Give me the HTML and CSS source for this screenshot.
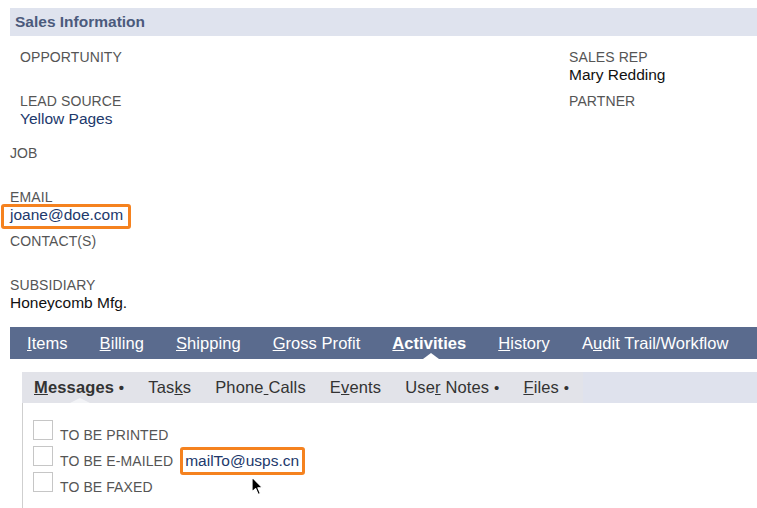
FILE: index.html
```html
<!DOCTYPE html>
<html>
<head>
<meta charset="utf-8">
<title>Sales Information</title>
<link rel="stylesheet" href="styles.css">
</head>
<body>
<div class="page">
  <div class="section-head">Sales Information</div>

  <div class="group group-top">
    <div class="col col-left">
      <div class="field"><div class="label">OPPORTUNITY</div><div class="value"></div></div>
      <div class="field"><div class="label">LEAD SOURCE</div><div class="value link">Yellow Pages</div></div>
    </div>
    <div class="col">
      <div class="field"><div class="label">SALES REP</div><div class="value">Mary Redding</div></div>
      <div class="field"><div class="label">PARTNER</div><div class="value"></div></div>
    </div>
  </div>

  <div class="group group-main">
    <div class="field"><div class="label">JOB</div><div class="value"></div></div>
    <div class="field"><div class="label">EMAIL</div><div class="value link"><span class="hl hl-email">joane@doe.com</span></div></div>
    <div class="field"><div class="label">CONTACT(S)</div><div class="value"></div></div>
    <div class="field"><div class="label">SUBSIDIARY</div><div class="value">Honeycomb Mfg.</div></div>
  </div>

  <nav class="tabs">
    <span class="tab"><u>I</u>tems</span>
    <span class="tab"><u>B</u>illing</span>
    <span class="tab"><u>S</u>hipping</span>
    <span class="tab"><u>G</u>ross Profit</span>
    <span class="tab tab-active"><u>A</u>ctivities</span>
    <span class="tab"><u>H</u>istory</span>
    <span class="tab">A<u>u</u>dit Trail/Workflow</span>
  </nav>

  <div class="subpanel">
    <div class="subtabs">
      <div class="subtab-list">
        <span class="subtab subtab-active"><u>M</u>essages <span class="dot">•</span></span>
        <span class="subtab">Tas<u>k</u>s</span>
        <span class="subtab">Phone<u> </u>Calls</span>
        <span class="subtab">E<u>v</u>ents</span>
        <span class="subtab">Use<u>r</u> Notes <span class="dot">•</span></span>
        <span class="subtab"><u>F</u>iles <span class="dot">•</span></span>
      </div>
    </div>
    <div class="panel-body">
      <div class="check-row"><span class="box"></span><span class="check-label">TO BE PRINTED</span></div>
      <div class="check-row"><span class="box"></span><span class="check-label">TO BE E-MAILED</span><span class="mail hl hl-mail">mailTo@usps.cn</span></div>
      <div class="check-row"><span class="box"></span><span class="check-label">TO BE FAXED</span></div>
    </div>
  </div>
</div>

<svg class="cursor" width="14" height="21" viewBox="0 0 14 21" aria-hidden="true">
  <path d="M1 1 L1 16 L4.6 12.6 L7.2 18.6 L9.4 17.6 L6.9 11.8 L11.6 11.8 Z" fill="#000" stroke="#fff" stroke-width="1.2" stroke-linejoin="round"/>
</svg>
</body>
</html>
```

FILE: styles.css
```css
html, body {
  margin: 0;
  padding: 0;
  background: #ffffff;
}

body {
  font-family: "Liberation Sans", Arial, Helvetica, sans-serif;
  color: #555555;
  width: 757px;
  height: 508px;
  overflow: hidden;
  position: relative;
}

.page {
  padding-top: 8px;
}

.section-head {
  margin-left: 10px;
  height: 28px;
  line-height: 28px;
  padding-left: 5px;
  background: #dfe3ee;
  color: #4b5a7c;
  font-weight: bold;
  font-size: 15.5px;
}

.group {
  display: flex;
}

.group-top {
  margin-top: 13px;
  padding-left: 20px;
}

.col-left {
  width: 549px;
}

.group-main {
  margin-top: 8px;
  padding-left: 10px;
  flex-direction: column;
  margin-bottom: 6px;
}

.field {
  margin-bottom: 10px;
}

.label {
  font-size: 14px;
  line-height: 17px;
  height: 17px;
  color: #555555;
  letter-spacing: 0.1px;
}

.value {
  font-size: 15.5px;
  line-height: 17px;
  height: 17px;
  color: #111111;
}

.value.link {
  color: #21386b;
}

.hl {
  position: relative;
  display: inline-block;
}

.hl::after {
  content: "";
  position: absolute;
  border: 3px solid #f5821f;
  border-radius: 3px;
}

.hl-email::after {
  top: -2px;
  bottom: -6px;
  left: -9px;
  right: -8px;
}

/* Main tab bar */
.tabs {
  margin-left: 10px;
  height: 32px;
  background: #5a6b8e;
  display: flex;
  padding-left: 1px;
}

.tab {
  position: relative;
  padding: 0 16px;
  line-height: 32px;
  font-size: 16.5px;
  letter-spacing: 0.05px;
  color: #ffffff;
  white-space: nowrap;
}

.tab-active {
  font-weight: bold;
}

.tab-active::after {
  content: "";
  position: absolute;
  left: 50%;
  bottom: 0;
  margin-left: -6px;
  border-left: 8px solid transparent;
  border-right: 8px solid transparent;
  border-bottom: 6px solid #ffffff;
}

/* Sub panel */
.subpanel {
  margin-top: 13px;
  margin-left: 22px;
}

.subtabs {
  height: 31px;
  background: #dfe2ed;
  display: flex;
}

.subtab-list {
  display: flex;
  background: #e2e3e9;
}

.subtab {
  position: relative;
  padding: 0 12px;
  line-height: 31px;
  font-size: 16.5px;
  letter-spacing: 0.15px;
  color: #333333;
  white-space: nowrap;
}

.subtab:last-child {
  padding-right: 14px;
}

.subtab-active {
  font-weight: bold;
}

.subtab-active::after {
  content: "";
  position: absolute;
  left: 50%;
  bottom: 0;
  margin-left: -9px;
  border-left: 10px solid transparent;
  border-right: 10px solid transparent;
  border-bottom: 5px solid #f2f3f6;
}

.dot {
  font-size: 15px;
}

.panel-body {
  border-left: 1px solid #cfcfcf;
  padding: 17px 0 20px 10px;
}

.check-row {
  height: 26px;
  line-height: 17px;
  font-size: 14px;
  white-space: nowrap;
}

.box {
  display: inline-block;
  width: 18px;
  height: 18px;
  border: 1px solid #c6c6c6;
  background: #ffffff;
  margin-right: 7px;
  vertical-align: baseline;
}

.check-label {
  color: #555555;
  letter-spacing: 0.1px;
}

.mail {
  margin-left: 12px;
  font-size: 15.5px;
  line-height: 17px;
  color: #21386b;
}

.hl-mail::after {
  top: -5px;
  bottom: -6px;
  left: -5px;
  right: -6px;
}

.cursor {
  position: absolute;
  left: 251px;
  top: 476px;
}
```
